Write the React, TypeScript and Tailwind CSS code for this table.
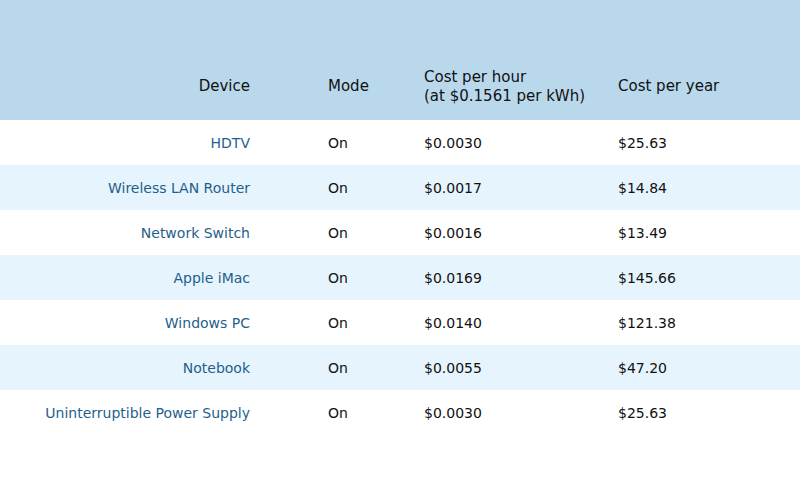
import React from "react";

interface DeviceRow {
  device: string;
  mode: string;
  perHour: string;
  perYear: string;
}

const rows: DeviceRow[] = [
  { device: "HDTV", mode: "On", perHour: "$0.0030", perYear: "$25.63" },
  { device: "Wireless LAN Router", mode: "On", perHour: "$0.0017", perYear: "$14.84" },
  { device: "Network Switch", mode: "On", perHour: "$0.0016", perYear: "$13.49" },
  { device: "Apple iMac", mode: "On", perHour: "$0.0169", perYear: "$145.66" },
  { device: "Windows PC", mode: "On", perHour: "$0.0140", perYear: "$121.38" },
  { device: "Notebook", mode: "On", perHour: "$0.0055", perYear: "$47.20" },
  { device: "Uninterruptible Power Supply", mode: "On", perHour: "$0.0030", perYear: "$25.63" },
];

const App: React.FC = () => {
  return (
    <div className="w-[800px] h-[480px] bg-white font-['DejaVu_Sans',sans-serif] text-[#111]">
      {/* header */}
      <div className="h-[120px] bg-[#bad8ec] flex items-center pt-[53px] text-[15px] leading-[19px]">
        <div className="w-[250px] text-right">Device</div>
        <div className="w-[174px] pl-[78px]">Mode</div>
        <div className="w-[194px]">
          Cost per hour
          <br />
          (at $0.1561 per kWh)
        </div>
        <div className="flex-1">Cost per year</div>
      </div>

      {rows.map((r, i) => (
        <div
          key={r.device}
          className={`h-[45px] flex items-center pt-[2px] text-[14px] ${i % 2 === 1 ? "bg-[#e6f4fd]" : "bg-white"}`}
        >
          <div className="w-[250px] text-right text-[#1f5f8b]">{r.device}</div>
          <div className="w-[174px] pl-[78px]">{r.mode}</div>
          <div className="w-[194px]">{r.perHour}</div>
          <div className="flex-1">{r.perYear}</div>
        </div>
      ))}
    </div>
  );
};

export default App;
